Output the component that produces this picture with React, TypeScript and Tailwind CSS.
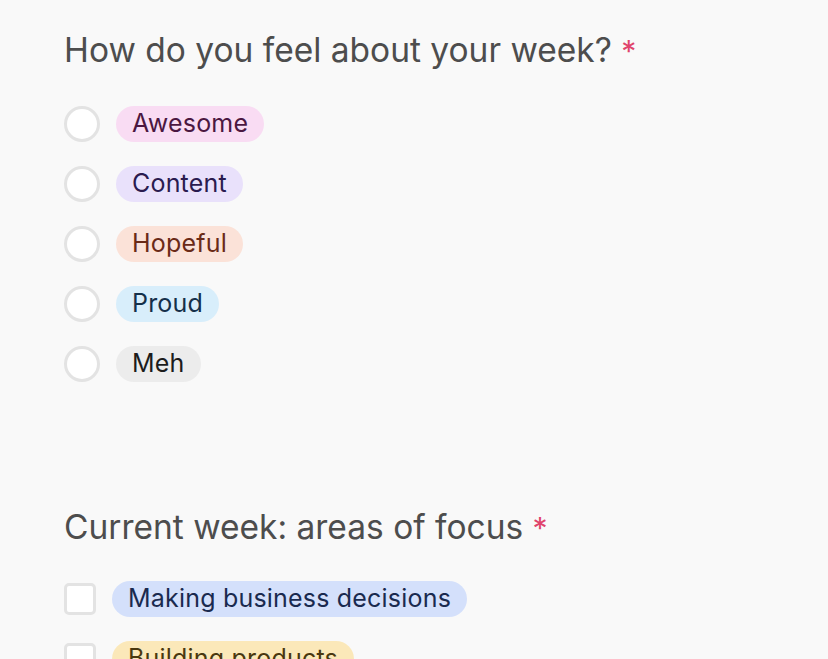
const moods = [
  { label: "Awesome", bg: "bg-[#f9dcf3]", text: "text-[#4b1741]" },
  { label: "Content", bg: "bg-[#e9e1fb]", text: "text-[#2a1b4f]" },
  { label: "Hopeful", bg: "bg-[#fbe2d8]", text: "text-[#6a2a17]" },
  { label: "Proud", bg: "bg-[#d8eefb]", text: "text-[#15304a]" },
  { label: "Meh", bg: "bg-[#ececec]", text: "text-[#1c1c1c]" },
];

const focus = [
  { label: "Making business decisions", bg: "bg-[#d4e0fb]", text: "text-[#1a2a4f]" },
  { label: "Building products", bg: "bg-[#fbe8b9]", text: "text-[#4a3810]" },
];

function Question({ title }: { title: string }) {
  return (
    <h2 className="text-[33.5px] leading-[40px] text-[#4d4d4d]">
      {title} <span className="text-[30px] text-[#e0446c]">*</span>
    </h2>
  );
}

function Pill({ label, bg, text }: { label: string; bg: string; text: string }) {
  return (
    <span className={`h-9 px-4 rounded-full flex items-center text-[25px] tracking-[0.2px] ${bg} ${text}`}>
      {label}
    </span>
  );
}

export default function App() {
  return (
    <div
      className="w-full bg-[#f9f9f9] pl-16 pt-[30px] overflow-hidden h-[659px]"
      style={{ fontFamily: "Inter, 'Noto Sans', sans-serif" }}
    >
      <Question title="How do you feel about your week?" />
      <div className="mt-[35px] flex flex-col gap-6">
        {moods.map((m) => (
          <label key={m.label} className="flex items-center gap-4">
            <span className="w-9 h-9 rounded-full border-[3px] border-[#e3e3e3] bg-white shrink-0" />
            <Pill {...m} />
          </label>
        ))}
      </div>

      <div className="mt-[125px]">
        <Question title="Current week: areas of focus" />
      </div>
      <div className="mt-[33px] flex flex-col gap-6">
        {focus.map((f) => (
          <label key={f.label} className="flex items-center gap-4">
            <span className="w-8 h-8 rounded-[5px] border-[3px] border-[#e3e3e3] bg-white shrink-0" />
            <Pill {...f} />
          </label>
        ))}
      </div>
    </div>
  );
}
